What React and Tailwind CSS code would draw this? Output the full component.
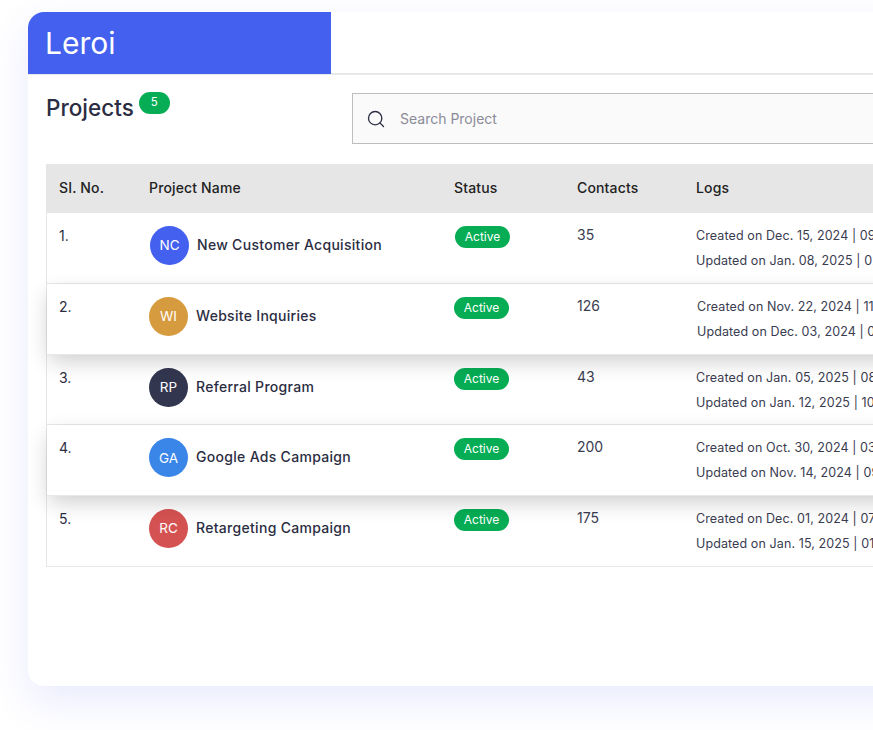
import React from "react";
import { Search } from "lucide-react";

const PROJECTS = [
  { no: "1.", initials: "NC", name: "New Customer Acquisition", color: "bg-[#4361ee]", contacts: "35", created: "Created on Dec. 15, 2024 | 09:30 AM", updated: "Updated on Jan. 08, 2025 | 02:15 PM", shift: "ml-[1px]" },
  { no: "2.", initials: "WI", name: "Website Inquiries", color: "bg-[#d69b3e]", contacts: "126", created: "Created on Nov. 22, 2024 | 11:45 AM", updated: "Updated on Dec. 03, 2024 | 04:20 PM", raised: true, logShift: "ml-[1px]" },
  { no: "3.", initials: "RP", name: "Referral Program", color: "bg-[#32364f]", contacts: "43", created: "Created on Jan. 05, 2025 | 08:10 AM", updated: "Updated on Jan. 12, 2025 | 10:30 AM" },
  { no: "4.", initials: "GA", name: "Google Ads Campaign", color: "bg-[#3a86e8]", contacts: "200", created: "Created on Oct. 30, 2024 | 03:25 PM", updated: "Updated on Nov. 14, 2024 | 09:05 AM", raised: true },
  { no: "5.", initials: "RC", name: "Retargeting Campaign", color: "bg-[#d55252]", contacts: "175", created: "Created on Dec. 01, 2024 | 07:40 AM", updated: "Updated on Jan. 15, 2025 | 01:50 PM" },
];

const COLS = "grid grid-cols-[90px_305px_123px_119px_300px]";

function Row({ project }) {
  return (
    <div
      className={`${COLS} h-[70.75px] border-b border-[#e8e8e8] bg-white pl-[12px] ${
        project.raised ? "relative z-10 shadow-[0_8px_22px_-2px_rgba(0,0,0,0.2)]" : ""
      }`}
    >
      <div className="pt-[13px] text-[14px] leading-[20px] text-[#2b2d42]">{project.no}</div>
      <div className={`flex items-start gap-[8px] pt-[13px] ${project.shift || ""}`}>
        <div className={`flex h-[39px] w-[39px] items-center justify-center rounded-full text-[13.5px] text-white ${project.color}`}>
          {project.initials}
        </div>
        <div className="pt-[9px] text-[14px] leading-[20px] font-[450] tracking-[0.3px] text-[#2b2d42]">{project.name}</div>
      </div>
      <div className={`pt-[13px] ${project.shift || ""}`}>
        <span className="flex h-[22px] w-[55px] items-center justify-center rounded-full bg-[#06ad54] text-[12px] text-white">Active</span>
      </div>
      <div className="pt-[12px] text-[14px] leading-[20px] text-[#3a3c50]">{project.contacts}</div>
      <div className={`pt-[10px] text-[12.5px] leading-[25px] tracking-[0.1px] whitespace-nowrap text-[#3a3c50] ${project.logShift || ""}`}>
        <div>{project.created}</div>
        <div>{project.updated}</div>
      </div>
    </div>
  );
}

export default function App() {
  return (
    <div className="h-[730px] w-[873px] overflow-hidden bg-white pt-[12px] pl-[28px] font-['Inter',sans-serif]">
      <div className="h-[674px] w-[1000px] rounded-[16px] bg-white shadow-[0_16px_40px_rgba(70,90,240,0.12)]">
        <div className="h-[63px] border-b-2 border-[#e8e8e8]">
          <div className="flex h-[62px] w-[303px] items-center rounded-tl-[16px] bg-[#4361ee] pl-[17px] text-[30px] text-white">Leroi</div>
        </div>

        <div className="px-[18px]">
          <div className="flex h-[89px] items-start">
            <div className="flex w-[306px] items-start pt-[18px]">
              <h1 className="text-[22.5px] leading-[30px] font-medium text-[#2b2d42]">Projects</h1>
              <span className="mt-[-1px] ml-[5px] flex h-[22px] w-[31px] items-center justify-center rounded-full bg-[#06ad54] text-[11.5px] text-white">5</span>
            </div>
            <div className="mt-[18px] flex h-[51px] w-[640px] items-center border border-[#bdbdbd] bg-[#fafafa] pl-[13px]">
              <Search size={20} strokeWidth={1.6} className="text-[#2b2d42]" />
              <span className="ml-[14px] text-[14px] text-[#8a8b98]">Search Project</span>
            </div>
          </div>

          <div className="border-l border-[#e6e6e6]">
            <div className={`${COLS} ml-[-1px] h-[49px] items-center bg-[#e6e6e6] pb-[3px] pl-[13px] text-[14px] font-medium tracking-[0.15px] text-[#222222]`}>
              <div>SI. No.</div>
              <div>Project Name</div>
              <div>Status</div>
              <div>Contacts</div>
              <div>Logs</div>
            </div>
            {PROJECTS.map((project) => (
              <Row key={project.no} project={project} />
            ))}
          </div>
        </div>
      </div>
    </div>
  );
}
